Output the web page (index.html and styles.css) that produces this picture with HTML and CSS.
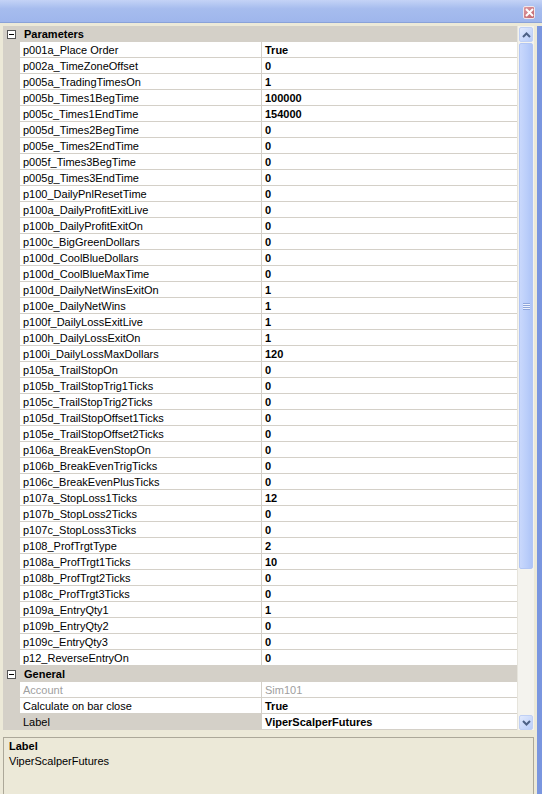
FILE: index.html
```html
<!DOCTYPE html>
<html lang="en">
  <head>
    <meta charset="UTF-8" />
    <title>Strategy Properties</title>
    <link rel="stylesheet" href="styles.css">
  </head>
  <body>
    <div class="titlebar">
      <span class="close-btn">
        <svg width="9" height="9" viewBox="0 0 9 9">
          <path d="M1 1 L8 8 M8 1 L1 8" stroke="#fff" stroke-width="2" />
        </svg>
      </span>
    </div>

    <div class="frame">
      <div class="main">
        <div class="grid">
          <div class="category"><span class="toggle"></span>Parameters</div>
          <div class="row"><span class="name">p001a_Place Order</span><span class="value">True</span></div>
          <div class="row"><span class="name">p002a_TimeZoneOffset</span><span class="value">0</span></div>
          <div class="row"><span class="name">p005a_TradingTimesOn</span><span class="value">1</span></div>
          <div class="row"><span class="name">p005b_Times1BegTime</span><span class="value">100000</span></div>
          <div class="row"><span class="name">p005c_Times1EndTime</span><span class="value">154000</span></div>
          <div class="row"><span class="name">p005d_Times2BegTime</span><span class="value">0</span></div>
          <div class="row"><span class="name">p005e_Times2EndTime</span><span class="value">0</span></div>
          <div class="row"><span class="name">p005f_Times3BegTime</span><span class="value">0</span></div>
          <div class="row"><span class="name">p005g_Times3EndTime</span><span class="value">0</span></div>
          <div class="row"><span class="name">p100_DailyPnlResetTime</span><span class="value">0</span></div>
          <div class="row"><span class="name">p100a_DailyProfitExitLive</span><span class="value">0</span></div>
          <div class="row"><span class="name">p100b_DailyProfitExitOn</span><span class="value">0</span></div>
          <div class="row"><span class="name">p100c_BigGreenDollars</span><span class="value">0</span></div>
          <div class="row"><span class="name">p100d_CoolBlueDollars</span><span class="value">0</span></div>
          <div class="row"><span class="name">p100d_CoolBlueMaxTime</span><span class="value">0</span></div>
          <div class="row"><span class="name">p100d_DailyNetWinsExitOn</span><span class="value">1</span></div>
          <div class="row"><span class="name">p100e_DailyNetWins</span><span class="value">1</span></div>
          <div class="row"><span class="name">p100f_DailyLossExitLive</span><span class="value">1</span></div>
          <div class="row"><span class="name">p100h_DailyLossExitOn</span><span class="value">1</span></div>
          <div class="row"><span class="name">p100i_DailyLossMaxDollars</span><span class="value">120</span></div>
          <div class="row"><span class="name">p105a_TrailStopOn</span><span class="value">0</span></div>
          <div class="row"><span class="name">p105b_TrailStopTrig1Ticks</span><span class="value">0</span></div>
          <div class="row"><span class="name">p105c_TrailStopTrig2Ticks</span><span class="value">0</span></div>
          <div class="row"><span class="name">p105d_TrailStopOffset1Ticks</span><span class="value">0</span></div>
          <div class="row"><span class="name">p105e_TrailStopOffset2Ticks</span><span class="value">0</span></div>
          <div class="row"><span class="name">p106a_BreakEvenStopOn</span><span class="value">0</span></div>
          <div class="row"><span class="name">p106b_BreakEvenTrigTicks</span><span class="value">0</span></div>
          <div class="row"><span class="name">p106c_BreakEvenPlusTicks</span><span class="value">0</span></div>
          <div class="row"><span class="name">p107a_StopLoss1Ticks</span><span class="value">12</span></div>
          <div class="row"><span class="name">p107b_StopLoss2Ticks</span><span class="value">0</span></div>
          <div class="row"><span class="name">p107c_StopLoss3Ticks</span><span class="value">0</span></div>
          <div class="row"><span class="name">p108_ProfTrgtType</span><span class="value">2</span></div>
          <div class="row"><span class="name">p108a_ProfTrgt1Ticks</span><span class="value">10</span></div>
          <div class="row"><span class="name">p108b_ProfTrgt2Ticks</span><span class="value">0</span></div>
          <div class="row"><span class="name">p108c_ProfTrgt3Ticks</span><span class="value">0</span></div>
          <div class="row"><span class="name">p109a_EntryQty1</span><span class="value">1</span></div>
          <div class="row"><span class="name">p109b_EntryQty2</span><span class="value">0</span></div>
          <div class="row"><span class="name">p109c_EntryQty3</span><span class="value">0</span></div>
          <div class="row"><span class="name">p12_ReverseEntryOn</span><span class="value">0</span></div>

          <div class="category"><span class="toggle"></span>General</div>
          <div class="row disabled"><span class="name">Account</span><span class="value">Sim101</span></div>
          <div class="row"><span class="name">Calculate on bar close</span><span class="value">True</span></div>
          <div class="row selected"><span class="name">Label</span><span class="value">ViperScalperFutures</span></div>
        </div>

        <div class="scrollbar">
          <span class="scroll-btn">
            <svg width="9" height="6" viewBox="0 0 9 6"><path d="M1 5 L4.5 1.5 L8 5" fill="none" stroke="#4d6185" stroke-width="2" /></svg>
          </span>
          <div class="track">
            <div class="thumb">
              <span class="grip"></span>
            </div>
          </div>
          <span class="scroll-btn">
            <svg width="9" height="6" viewBox="0 0 9 6"><path d="M1 1 L4.5 4.5 L8 1" fill="none" stroke="#4d6185" stroke-width="2" /></svg>
          </span>
        </div>
      </div>

      <div class="help">
        <div class="help-title">Label</div>
        <div class="help-text">ViperScalperFutures</div>
      </div>
    </div>
  </body>
</html>
```

FILE: styles.css
```css
body {
  margin: 0;
  width: 542px;
  height: 794px;
  overflow: hidden;
  background-color: #ece9d8;
  font-family: "Liberation Sans", Arial, sans-serif;
  font-size: 11px;
  color: #000;
}
.titlebar {
  height: 23px;
  box-sizing: border-box;
  border-bottom: 1px solid #8aa2d8;
  background: linear-gradient(#c4d3f6, #a6bcee 40%, #9fb6ec);
  display: flex;
  justify-content: flex-end;
  align-items: flex-start;
  padding: 6px 7px 0 0;
}
.close-btn {
  width: 12px;
  height: 13px;
  box-sizing: border-box;
  border: 1px solid #f0e6ea;
  border-radius: 2px;
  background: linear-gradient(135deg, #de9aa0, #c0646c);
  display: flex;
  align-items: center;
  justify-content: center;
}

/* window body, blue edge on the right */
.frame {
  border-right: 5px solid #7a96df;
  height: 771px;
}
.main {
  display: flex;
  margin-top: 3px;
  padding-left: 3px;
  height: 704px;
}

/* property grid */
.grid {
  width: 514px;
  background-color: #d4d0c8;
  overflow: hidden;
}
.category {
  height: 16px;
  line-height: 17px;
  display: flex;
  align-items: center;
  font-weight: bold;
}
.toggle {
  position: relative;
  width: 9px;
  height: 9px;
  box-sizing: border-box;
  border: 1px solid #555;
  background-color: #fff;
  margin: 1px 8px 0 4px;
}
.toggle::after {
  content: "";
  position: absolute;
  left: 1px;
  top: 3px;
  width: 5px;
  height: 1px;
  background-color: #000;
}
.row {
  display: flex;
  height: 16px;
  margin-left: 17px;
}
.name,
.value {
  box-sizing: border-box;
  height: 16px;
  line-height: 17px;
  border-bottom: 1px solid #d4d0c8;
  background-color: #fff;
  white-space: nowrap;
  overflow: hidden;
}
.name {
  width: 241px;
  padding-left: 3px;
}
.value {
  flex: 1;
  border-left: 1px solid #d4d0c8;
  padding-left: 3px;
  font-weight: bold;
}
.disabled .name,
.disabled .value {
  color: #a0a0a0;
  font-weight: normal;
}
.selected .name {
  background-color: #d4d0c8;
}

/* scrollbar */
.scrollbar {
  width: 17px;
  display: flex;
  flex-direction: column;
  background-color: #f4f3ee;
  border-left: 1px solid #e6e4dc;
  box-sizing: border-box;
  padding: 1px 1px 0 1px;
}
.scroll-btn {
  height: 15px;
  box-sizing: border-box;
  border: 1px solid #c0d0f4;
  border-radius: 2px;
  background: linear-gradient(135deg, #e2eafd, #b9cdf9);
  display: flex;
  align-items: center;
  justify-content: center;
}
.track {
  flex: 1;
  padding: 1px 0;
}
.thumb {
  height: 526px;
  box-sizing: border-box;
  border: 1px solid #b2c6f4;
  border-radius: 2px;
  background: linear-gradient(90deg, #c9d8fc, #b9cdfa 60%, #aec4f7);
  display: flex;
  align-items: center;
  justify-content: center;
}
.grip {
  width: 7px;
  height: 7px;
  background: repeating-linear-gradient(#8ea6dc 0 1px, #eef2fd 1px 2px);
}

/* description panel */
.help {
  margin: 7px 3px 0 3px;
  height: 60px;
  border: 1px solid #aca899;
  border-bottom: none;
  padding: 1px 5px;
}
.help-title {
  font-weight: bold;
  line-height: 15px;
}
.help-text {
  line-height: 15px;
}
```
